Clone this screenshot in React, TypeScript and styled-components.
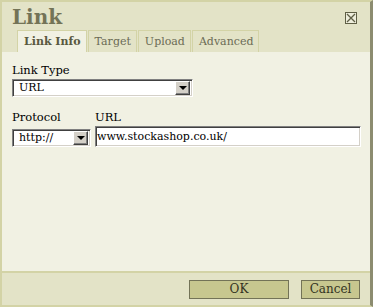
import React from "react";
import styled, { createGlobalStyle } from "styled-components";

const GlobalStyle = createGlobalStyle`
  html, body {
    margin: 0;
    padding: 0;
    background: #e3e3c7;
  }
  * {
    box-sizing: border-box;
  }
`;

const Dialog = styled.div`
  width: 373px;
  height: 307px;
  display: flex;
  flex-direction: column;
  font-family: "DejaVu Serif", "Liberation Serif", serif;
  font-size: 12px;
  color: #000;
  background: #e3e3c7;
  border: 2px solid #d3d3a6;
  border-right: 3px solid #8c8c70;
`;

const Header = styled.div`
  display: flex;
  flex-direction: column;
  background: #e3e3c7;
`;

const TitleRow = styled.div`
  height: 28px;
  display: flex;
  align-items: center;
  justify-content: space-between;
  padding: 1px 13px 0 10px;
`;

const Title = styled.h1`
  margin: 0;
  font-size: 20px;
  font-weight: bold;
  color: #737357;
`;

const CloseBox = styled.div`
  width: 12px;
  height: 12px;
  margin-top: 3px;
  border: 1px solid #5f5f45;
  background: #eeeedc;
  display: flex;
  align-items: center;
  justify-content: center;
`;

const Tabs = styled.div`
  display: flex;
  padding-left: 15px;
  height: 22px;
`;

const Tab = styled.div<{ $active?: boolean }>`
  display: flex;
  align-items: center;
  padding: 0 5px 0 6px;
  font-size: 11px;
  border: 1px solid #d3d3a6;
  border-bottom: none;
  margin-right: 1px;
  color: ${(p) => (p.$active ? "#59593f" : "#6b6b55")};
  font-weight: ${(p) => (p.$active ? "bold" : "normal")};
  background: ${(p) => (p.$active ? "#f1f1e3" : "#e3e3c7")};
`;

const Content = styled.div`
  flex: 1;
  background: #f1f1e3;
  padding: 11px 9px 0 10px;
  display: flex;
  flex-direction: column;
  gap: 13px;
`;

const Field = styled.div<{ $grow?: boolean }>`
  display: flex;
  flex-direction: column;
  justify-content: space-between;
  gap: 1px;
  flex: ${(p) => (p.$grow ? 1 : "none")};
`;

const Label = styled.label`
  color: #000;
  font-size: 11.5px;
  line-height: 15px;
`;

const Row = styled.div`
  display: flex;
  gap: 4px;
  align-items: stretch;
`;

const Combo = styled.div<{ $width: number }>`
  width: ${(p) => p.$width}px;
  height: 18px;
  background: #fff;
  display: flex;
  align-items: center;
  border: 1px solid;
  border-color: #808080 #fff #fff #808080;
  box-shadow: inset 1px 1px 0 #404040, inset -1px -1px 0 #d4d0c8;
  padding: 2px;
`;

const ComboText = styled.span`
  flex: 1;
  padding-left: 4px;
  font-size: 11px;
  line-height: 14px;
`;

const ArrowButton = styled.span`
  width: 15px;
  height: 14px;
  background: #d4d0c8;
  border: 1px solid;
  border-color: #fff #404040 #404040 #fff;
  box-shadow: inset -1px -1px 0 #808080;
  display: flex;
  align-items: center;
  justify-content: center;
`;

const Arrow = styled.span`
  width: 0;
  height: 0;
  border-left: 4px solid transparent;
  border-right: 4px solid transparent;
  border-top: 4px solid #000;
`;

const UrlInput = styled.input`
  width: 100%;
  height: 21px;
  margin: 0;
  padding: 1px 1px;
  font-family: inherit;
  font-size: 11px;
  color: #000;
  background: #fff;
  border: 1px solid;
  border-color: #808080 #fff #fff #808080;
  box-shadow: inset 1px 1px 0 #404040, inset -1px -1px 0 #d4d0c8;
  outline: none;
`;

const Footer = styled.div`
  height: 34px;
  background: #e3e3c7;
  border-top: 2px solid #d3d3a6;
  display: flex;
  align-items: center;
  justify-content: flex-end;
  gap: 12px;
  padding-right: 10px;
`;

const Button = styled.button<{ $width: number }>`
  width: ${(p) => p.$width}px;
  height: 19px;
  margin: 0;
  padding: 0;
  font-family: inherit;
  font-size: 12px;
  color: #333322;
  background: #c7c78f;
  border: 1px solid #737357;
  cursor: pointer;
`;

const Select = ({ value, width }: { value: string; width: number }) => (
  <Combo $width={width}>
    <ComboText>{value}</ComboText>
    <ArrowButton>
      <Arrow />
    </ArrowButton>
  </Combo>
);

export default function App() {
  return (
    <>
      <GlobalStyle />
      <Dialog>
        <Header>
          <TitleRow>
            <Title>Link</Title>
            <CloseBox>
              <svg width="10" height="10" viewBox="0 0 10 10">
                <path d="M1 1L9 9M9 1L1 9" stroke="#5f5f45" strokeWidth="1.3" />
              </svg>
            </CloseBox>
          </TitleRow>
          <Tabs>
            <Tab $active>Link Info</Tab>
            <Tab>Target</Tab>
            <Tab>Upload</Tab>
            <Tab>Advanced</Tab>
          </Tabs>
        </Header>
        <Content>
          <Field>
            <Label>Link Type</Label>
            <Select value="URL" width={181} />
          </Field>
          <Row>
            <Field>
              <Label>Protocol</Label>
              <Select value="http://" width={79} />
            </Field>
            <Field $grow>
              <Label>URL</Label>
              <UrlInput readOnly value="www.stockashop.co.uk/" />
            </Field>
          </Row>
        </Content>
        <Footer>
          <Button $width={100}>OK</Button>
          <Button $width={59}>Cancel</Button>
        </Footer>
      </Dialog>
    </>
  );
}
